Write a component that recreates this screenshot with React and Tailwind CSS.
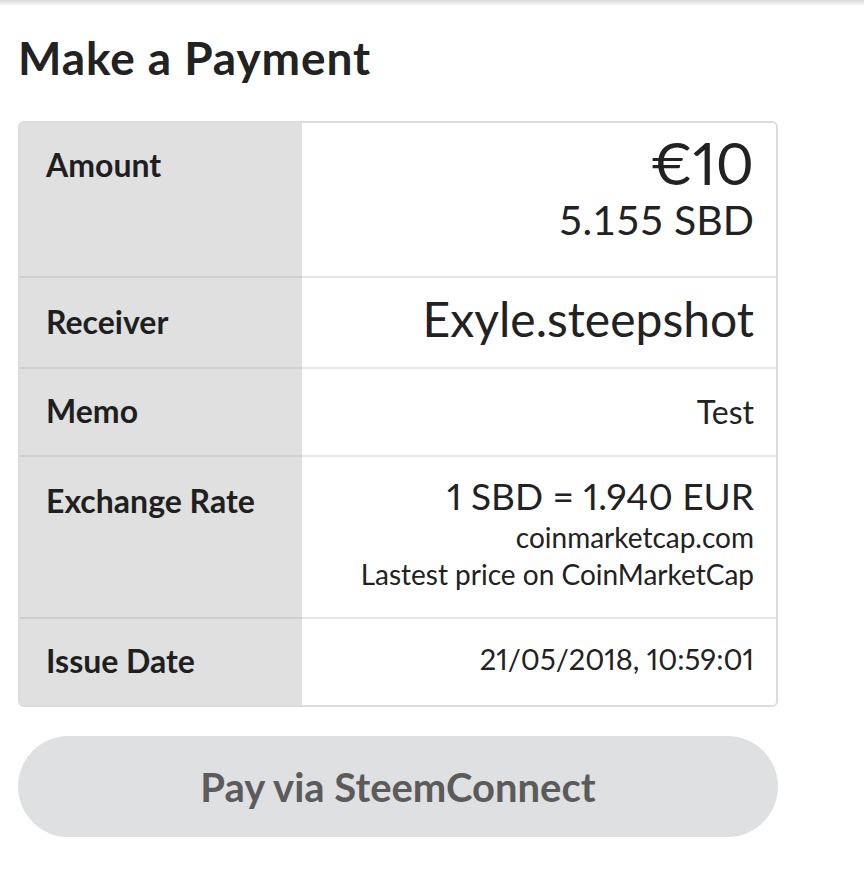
const ROWS = [
  { label: "Amount", h: "h-[155px]", labelPt: "pt-[23px]", valuePt: "pt-[6px]" },
  { label: "Receiver", h: "h-[91px]", labelPt: "pt-[25px]", valuePt: "pt-[12px]" },
  { label: "Memo", h: "h-[88px]", labelPt: "pt-[23px]", valuePt: "pt-[24px]" },
  { label: "Exchange Rate", h: "h-[162px]", labelPt: "pt-[25px]", valuePt: "pt-[16px]" },
  { label: "Issue Date", h: "h-[86px]", labelPt: "pt-[23px]", valuePt: "pt-[23px]" },
]

function RowValue({ index }) {
  if (index === 0) {
    return (
      <>
        <div className="text-[58px] leading-[68px]">€10</div>
        <div className="text-[41px] leading-[46px] tabular-nums">5.155 SBD</div>
      </>
    )
  }
  if (index === 1) return <div className="text-[48px] leading-[1.2]">Exyle.steepshot</div>
  if (index === 2) return <div className="text-[32px] leading-[1.2]">Test</div>
  if (index === 3) {
    return (
      <>
        <div className="text-[37px] leading-[46px]">1 SBD = 1.940 EUR</div>
        <div className="text-[28px] leading-[37px]">coinmarketcap.com</div>
        <div className="text-[28px] leading-[37px]">Lastest price on CoinMarketCap</div>
      </>
    )
  }
  return <div className="text-[29px] leading-[1.2]">21/05/2018, 10:59:01</div>
}

export default function App() {
  return (
    <div className="min-h-[888px] bg-white font-['Lato',sans-serif] text-[#222] proportional-nums">
      <div className="h-[6px] bg-[linear-gradient(to_bottom,#d9d9d9,#ffffff)]" />

      <div className="pl-[18px] pt-[24px]">
        <h1 className="text-[46px] font-bold leading-[1.2] tracking-[0.9px] text-[#222]">Make a Payment</h1>

        <div className="mt-[36px] w-[760px] overflow-hidden rounded-md border-2 border-[#dcdcdc]">
          {ROWS.map((row, i) => {
            const last = i === ROWS.length - 1
            return (
              <div key={row.label} className="flex">
                <div
                  className={`${row.h} w-[282px] shrink-0 bg-[#e0e0e0] pl-[26px] ${row.labelPt} ${
                    last ? "" : "border-b-2 border-[#cfcfcf]"
                  }`}
                >
                  <div className="text-[32px] font-bold leading-[1.2] text-[#1f1f1f]">{row.label}</div>
                </div>
                <div
                  className={`${row.h} flex-1 bg-white pr-[22px] text-right ${row.valuePt} ${
                    last ? "" : "border-b-2 border-[#e6e6e6]"
                  }`}
                >
                  <RowValue index={i} />
                </div>
              </div>
            )
          })}
        </div>

        <button
          type="button"
          className="mt-[29px] flex h-[101px] w-[760px] items-center justify-center rounded-full bg-[#dfe0e2] text-[40px] font-bold text-[#5b5b5b]"
        >
          Pay via SteemConnect
        </button>
      </div>
    </div>
  )
}
